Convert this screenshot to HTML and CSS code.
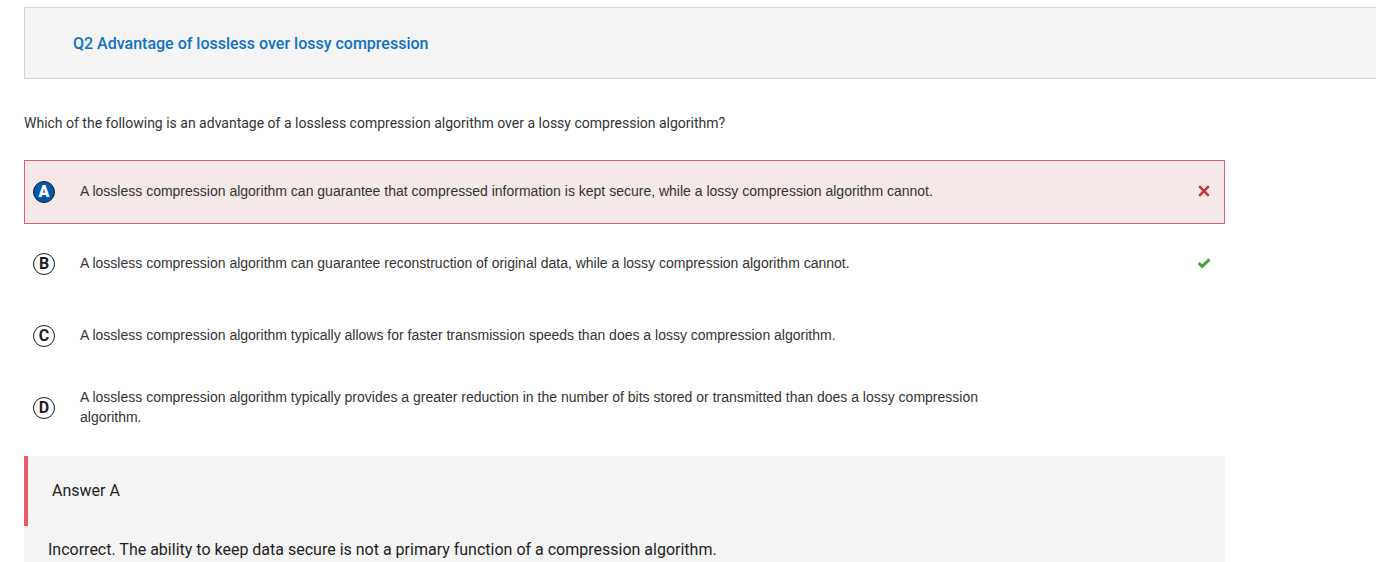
FILE: index.html
```html
<!DOCTYPE html>
<html lang="en">
<head>
<meta charset="utf-8">
<title>Q2 Advantage of lossless over lossy compression</title>
<link rel="stylesheet" href="styles.css">
</head>
<body>
<main class="page">
  <header class="question-header">
    <h1 class="question-title"><a class="question-link" href="#question">Q2 Advantage of lossless over lossy compression</a></h1>
  </header>
  <form class="question" id="question">
    <p class="prompt" id="prompt">Which of the following is an advantage of a lossless compression algorithm over a lossy compression algorithm?</p>
    <div class="choices" role="radiogroup" aria-labelledby="prompt">
      <label class="choice choice-incorrect">
        <span class="marker"><input class="marker-input" type="radio" name="answer" value="A" checked><span class="marker-letter">A</span></span>
        <span class="choice-text">A lossless compression algorithm can guarantee that compressed information is kept secure, while a lossy compression algorithm cannot.</span>
        <svg class="result result-wrong" viewBox="0 0 14 14" role="img" aria-label="Incorrect"><path d="M2.2 2.2 11.8 11.8M11.8 2.2 2.2 11.8"/></svg>
      </label>
      <label class="choice">
        <span class="marker"><input class="marker-input" type="radio" name="answer" value="B"><span class="marker-letter">B</span></span>
        <span class="choice-text">A lossless compression algorithm can guarantee reconstruction of original data, while a lossy compression algorithm cannot.</span>
        <svg class="result result-right" viewBox="0 0 14 14" role="img" aria-label="Correct"><path d="M1.6 7 5.2 10.4 12.4 3.4"/></svg>
      </label>
      <label class="choice">
        <span class="marker"><input class="marker-input" type="radio" name="answer" value="C"><span class="marker-letter">C</span></span>
        <span class="choice-text">A lossless compression algorithm typically allows for faster transmission speeds than does a lossy compression algorithm.</span>
      </label>
      <label class="choice">
        <span class="marker"><input class="marker-input" type="radio" name="answer" value="D"><span class="marker-letter">D</span></span>
        <span class="choice-text">A lossless compression algorithm typically provides a greater reduction in the number of bits stored or transmitted than does a lossy compression algorithm.</span>
      </label>
    </div>
  </form>
  <section class="feedback">
    <h2 class="feedback-title">Answer A</h2>
    <p class="feedback-text">Incorrect. The ability to keep data secure is not a primary function of a compression algorithm.</p>
  </section>
</main>
</body>
</html>
```
FILE: styles.css
```css
* {
  box-sizing: border-box;
}

body {
  margin: 0;
  background: #fff;
  color: #333;
  font-family: Roboto, "Liberation Sans", sans-serif;
  font-size: 14px;
  line-height: 20px;
}

.page {
  display: flex;
  flex-direction: column;
  min-height: 100vh;
  padding: 7px 0 0 24px;
}

.question-header {
  padding: 24px 48px 22px;
  background: #f4f4f4;
  border: 1px solid #d0d2d3;
  border-right: 0;
}

.question-title {
  margin: 0;
  font-size: 16px;
  font-weight: 500;
  line-height: 24px;
}

.question-link {
  color: #0f71c5;
  text-decoration: none;
}

.question,
.feedback {
  width: 100%;
  max-width: 1201px;
}

.prompt {
  margin: 34px 0 27px;
}

.choices {
  display: flex;
  flex-direction: column;
  gap: 8px;
}

.choice {
  display: flex;
  align-items: center;
  min-height: 64px;
  padding: 8px 13px 8px 8px;
  border: 1px solid transparent;
  cursor: pointer;
}

.choice-incorrect {
  background: #f4e9e8;
  border-color: #e85a6b;
}

.marker {
  display: grid;
  flex: none;
  margin-right: 25px;
  place-items: center;
}

.marker-input {
  grid-area: 1 / 1;
  width: 22px;
  height: 22px;
  margin: 0;
  appearance: none;
  background: #fff;
  border: 1px solid #1e1e1e;
  border-radius: 50%;
}

.marker-input:checked {
  background: #0057b0;
}

.marker-letter {
  grid-area: 1 / 1;
  color: #1e1e1e;
  font-size: 16px;
  font-weight: 700;
}

.marker-input:checked + .marker-letter {
  color: #fff;
  font-weight: 900;
}

.choice-text {
  max-width: 920px;
  padding-bottom: 2px;
  font-family: "Liberation Sans", Arial, sans-serif;
}

.result {
  flex: none;
  width: 14px;
  height: 14px;
  margin-bottom: 2px;
  margin-left: auto;
  fill: none;
  stroke-width: 2.4;
}

.result-wrong {
  stroke: #c92f3c;
}

.result-right {
  stroke: #43a63c;
  stroke-width: 3;
}

.feedback {
  flex: 1;
  margin-top: 16px;
  background: #f4f4f4;
  color: #1e1e1e;
}

.feedback-title {
  margin: 0;
  padding: 23px 24px;
  border-left: 4px solid #e85a6b;
  font-size: 16px;
  font-weight: 400;
  line-height: 24px;
}

.feedback-text {
  margin: 0;
  padding: 12px 24px 0;
  font-size: 16px;
  line-height: 24px;
}
```
